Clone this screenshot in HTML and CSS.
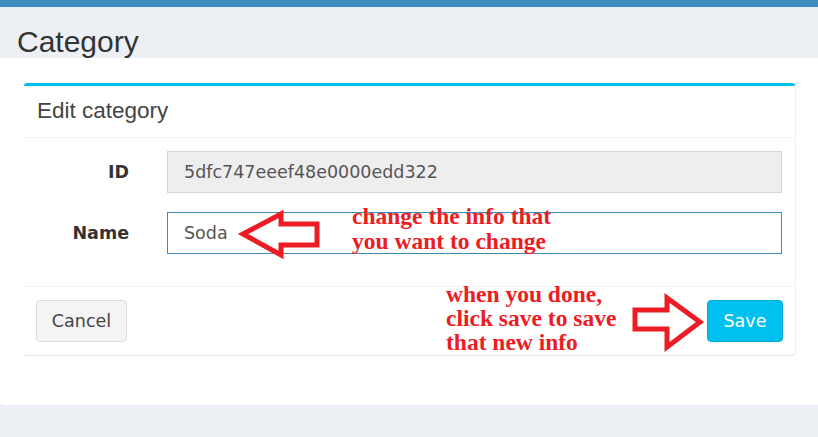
FILE: index.html
```html
<!DOCTYPE html>
<html lang="en">
<head>
<meta charset="utf-8">
<title>Category</title>
<link rel="stylesheet" href="styles.css">
</head>
<body>
<div class="page">
  <div class="topbar"></div>
  <div class="content-header">
    <h1>Category</h1>
  </div>
  <main class="panel">
    <section class="box">
      <div class="box-header">
        <h3>Edit category</h3>
      </div>
      <div class="box-body">
        <div class="form-row">
          <label class="form-label">ID</label>
          <div class="input input-readonly">5dfc747eeef48e0000edd322</div>
        </div>
        <div class="form-row">
          <label class="form-label">Name</label>
          <div class="input input-focus">Soda</div>
        </div>
      </div>
      <div class="box-footer">
        <button class="btn btn-default">Cancel</button>
        <button class="btn btn-info">Save</button>
      </div>
    </section>
  </main>

  <div class="note note-name">change the info that<br>you want to change</div>
  <div class="note note-save">when you done,<br>click save to save<br>that new info</div>

  <svg class="arrow arrow-left" width="90" height="56" viewBox="236 208 90 56">
    <polygon points="243,234 281,214 281,224 317,224 317,245 281,245 281,255" fill="none" stroke="#ed1c24" stroke-width="5" stroke-linejoin="miter"/>
  </svg>
  <svg class="arrow arrow-right" width="84" height="64" viewBox="628 290 84 64">
    <polygon points="635,310 667,310 667,298 700,322 667,347 667,329 635,329" fill="none" stroke="#ed1c24" stroke-width="5" stroke-linejoin="miter"/>
  </svg>
</div>
</body>
</html>
```

FILE: styles.css
```css
* { box-sizing: border-box; }

html, body {
  margin: 0;
  padding: 0;
  background: #ecf0f5;
}

body {
  font-family: "DejaVu Sans", Verdana, sans-serif;
  font-size: 17.5px;
  color: #333;
}

.page {
  position: relative;
  width: 818px;
  height: 437px;
  overflow: hidden;
}

.topbar {
  height: 7px;
  background: #3c8dbc;
}

.content-header {
  height: 51px;
  padding: 18px 0 0 17px;
}

.content-header h1 {
  margin: 0;
  font-family: "Liberation Sans", Arial, sans-serif;
  font-size: 30px;
  font-weight: normal;
  line-height: 33px;
  color: #333;
}

.panel {
  display: block;
  height: 347px;
  background: #fff;
  border-radius: 0 0 0 4px;
  padding: 25px 23px 0 24px;
}

.box {
  width: 771px;
  background: #fff;
  border-top: 3px solid #00c0ef;
  border-radius: 3px;
  box-shadow: 0 1px 1px rgba(0, 0, 0, 0.1), 1px 0 0 #f4f4f4;
}

.box-header {
  padding: 13px 13px 13px;
  border-bottom: 1px solid #f4f4f4;
}

.box-header h3 {
  margin: 0;
  font-family: "Liberation Sans", Arial, sans-serif;
  font-size: 22.5px;
  font-weight: normal;
  line-height: 24.75px;
  color: #444;
}

.box-body {
  padding: 13px 13px 32px;
  display: flex;
  flex-direction: column;
  gap: 19px;
}

.form-row {
  display: grid;
  grid-template-columns: 92px 1fr;
  column-gap: 38px;
  align-items: center;
}

.form-label {
  text-align: right;
  font-weight: bold;
  color: #333;
}

.input {
  height: 42px;
  display: flex;
  align-items: center;
  padding: 0 16px;
  border: 1px solid #d2d6de;
  color: #555;
  background: #fff;
}

.input-readonly {
  background: #eee;
}

.input-focus {
  border-color: #3c8dbc;
}

.box-footer {
  border-top: 1px solid #f4f4f4;
  padding: 13px 12px;
  display: flex;
  justify-content: space-between;
}

.btn {
  height: 42px;
  border-radius: 4px;
  font-family: "DejaVu Sans", Verdana, sans-serif;
  font-size: 17.5px;
  padding: 0;
  cursor: pointer;
}

.btn-default {
  width: 91px;
  background: #f4f4f4;
  border: 1px solid #ddd;
  color: #444;
}

.btn-info {
  width: 76px;
  background: #00c0ef;
  border: 1px solid #00acd6;
  color: #fff;
}

.note {
  position: absolute;
  font-family: "Liberation Serif", "Times New Roman", serif;
  font-weight: bold;
  font-size: 23.5px;
  color: #ed1c24;
  white-space: nowrap;
}

.note-name {
  left: 352px;
  top: 204px;
  line-height: 25px;
}

.note-save {
  left: 446px;
  top: 282px;
  line-height: 24px;
}

.arrow {
  position: absolute;
}

.arrow-left {
  left: 236px;
  top: 208px;
}

.arrow-right {
  left: 628px;
  top: 290px;
}
```
